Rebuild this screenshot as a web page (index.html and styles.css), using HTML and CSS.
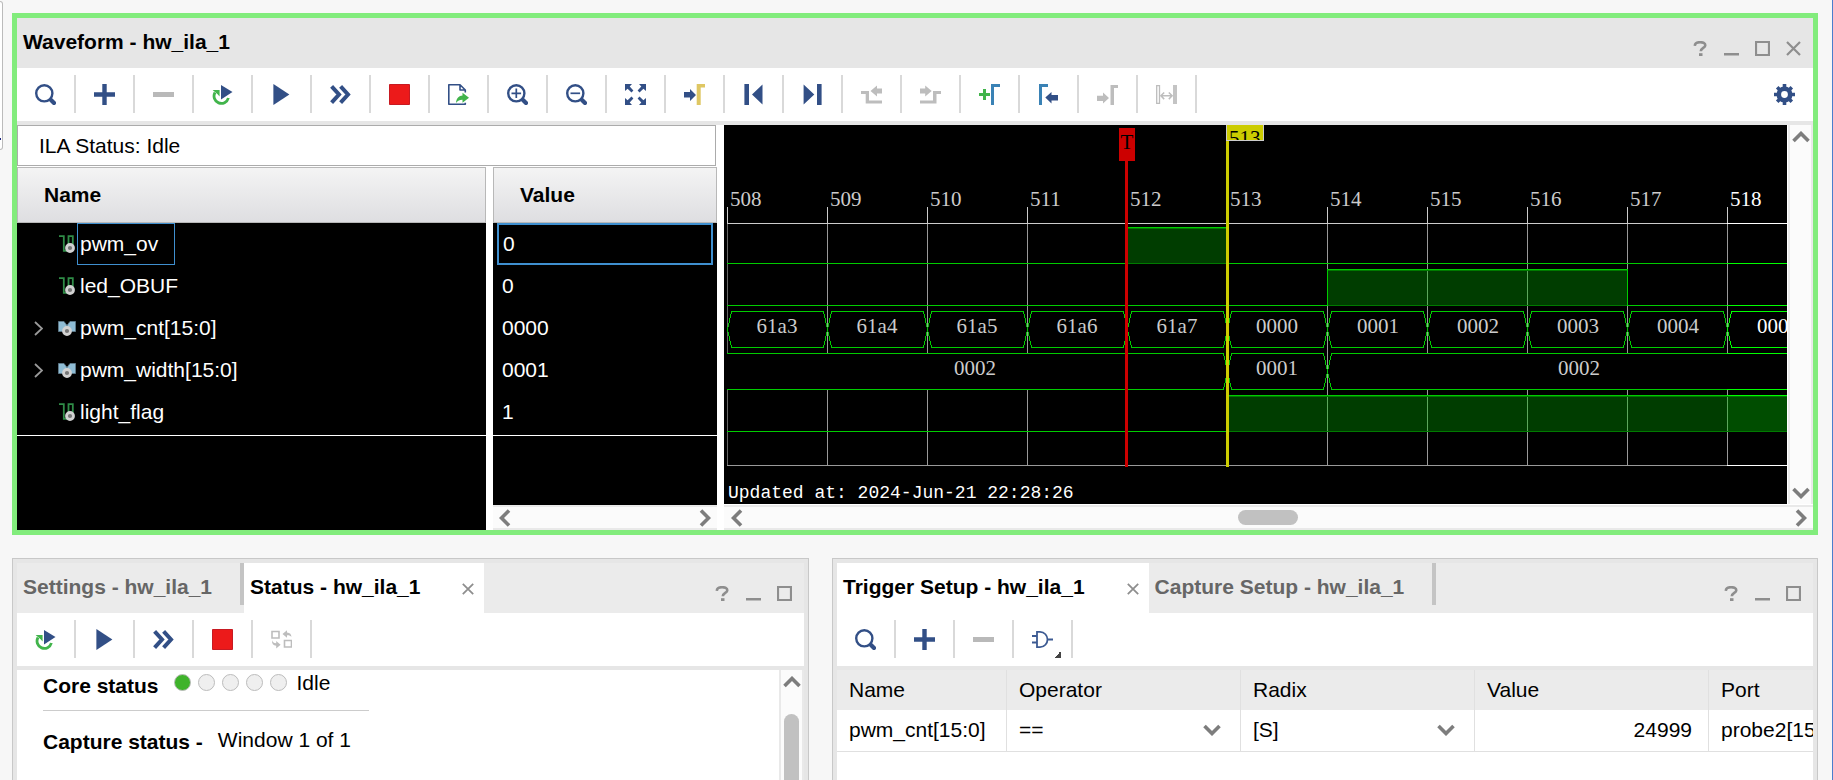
FILE: index.html
```html
<!DOCTYPE html>
<html lang="en">
<head>
<meta charset="utf-8">
<title>Waveform - hw_ila_1</title>
<link rel="stylesheet" href="styles.css">
</head>
<body>
<svg class="sprite" aria-hidden="true">
  <symbol id="search" viewBox="0 0 21 21"><circle cx="9.3" cy="9.3" r="8.1" fill="none" stroke="#324f86" stroke-width="2.4"/><path d="M16 16l3 3" stroke="#324f86" stroke-width="4.2" stroke-linecap="round"/></symbol>
  <symbol id="zoomin" viewBox="0 0 21 21"><use href="#search"/><path d="M4.5 9.3h9.6M9.3 4.5v9.6" stroke="#324f86" stroke-width="1.7"/></symbol>
  <symbol id="zoomout" viewBox="0 0 21 21"><use href="#search"/><path d="M4.5 9.3h9.6" stroke="#324f86" stroke-width="1.7"/></symbol>
  <symbol id="plus" viewBox="0 0 21 21"><path d="M0 10.5h21M10.5 0v21" stroke="#324f86" stroke-width="4.4"/></symbol>
  <symbol id="minus" viewBox="0 0 21 21"><path d="M0 10.5h21" stroke="#b9b9b9" stroke-width="5"/></symbol>
  <symbol id="rerun" viewBox="0 0 21 21"><path d="M3 8.5A7.300 7.300 0 1 0 16.4 14" fill="none" stroke="#41b44b" stroke-width="2.8"/><path d="M.6 6h7v6.6l-2-2.4z" fill="#41b44b"/><path d="M9 1l11.500 7L9 15.400z" fill="#324f86"/></symbol>
  <symbol id="play" viewBox="0 0 21 21"><path d="M2.4 0l16 10.5-16 10.5z" fill="#324f86"/></symbol>
  <symbol id="fast" viewBox="0 0 21 21"><path d="M1.6 2.4l7.4 8.1-7.4 8.1M10.6 2.4l7.4 8.1-7.4 8.1" fill="none" stroke="#324f86" stroke-width="4"/></symbol>
  <symbol id="stop" viewBox="0 0 21 21"><path d="M.5.5h20v20H.5z" fill="#ec1a1a" stroke="#c71a22"/></symbol>
  <symbol id="export" viewBox="0 0 21 21"><path d="M17.3 8.5V6L12 .8H.8v19.4h16.5v-1.5M12 .8V6h5.3" fill="none" stroke="#324f86" stroke-width="1.6" stroke-linejoin="round"/><path d="M8 19c.4-5 3-7.4 6.5-7.6V8.700l6.500 5-6.500 5v-2.900C12 15.700 9.800 16.500 8 19z" fill="#41b44b"/></symbol>
  <symbol id="fit" viewBox="0 0 21 21"><g fill="#324f86"><path id="fa" d="M0 0h7L4.700 2.600l3.700 3.900-1.900 1.900-3.900-3.700L0 7z"/><use href="#fa" transform="matrix(-1 0 0 1 21 0)"/><use href="#fa" transform="matrix(1 0 0 -1 0 21)"/><use href="#fa" transform="rotate(180 10.500 10.500)"/></g></symbol>
  <symbol id="totrig" viewBox="0 0 21 21"><path d="M0 8h6V5l6 6-6 6v-3.500H0z" fill="#324f86"/><path d="M12.700 0H21v3.500h-4.300V21h-4z" fill="#dfc763"/></symbol>
  <symbol id="first" viewBox="0 0 21 21"><path d="M1.400 0H6v21H1.400zM19.500.5v20L9 10.500z" fill="#324f86"/></symbol>
  <symbol id="last" viewBox="0 0 21 21"><path d="M15 0h4.600v21H15zM1.600.5v20L12.300 10.500z" fill="#324f86"/></symbol>
  <symbol id="prevt" viewBox="0 0 21 21"><path d="M0 7h8v9.500h13v3H4.700V10H0zM9.500 7L16 1.500v3h5v5h-5v3z" fill="#bdbdbd"/></symbol>
  <symbol id="nextt" viewBox="0 0 21 21"><path d="M21 7h-8v9.500H0v3h16.500V10H21zM11.700 7L5.200 1.500v3H0v5h5.200v3z" fill="#bdbdbd"/></symbol>
  <symbol id="addm" viewBox="0 0 21 21"><path d="M0 10.500h11M5.500 5v11" stroke="#41b44b" stroke-width="3"/><path d="M12 0h9v3h-6v18h-3z" fill="#3a82b5"/></symbol>
  <symbol id="prevm" viewBox="0 0 21 21"><path d="M1 0h9v3H4v18H1z" fill="#3a82b5"/><path d="M7.300 13.500L13.500 8v3H20v5.500h-6.500v3z" fill="#324f86"/></symbol>
  <symbol id="nextm" viewBox="0 0 21 21"><path d="M0 11.700h6V8.600l6 5.500-6 5.500V17H0zM13.500 1H21v3h-4v17h-3.500z" fill="#bdbdbd"/></symbol>
  <symbol id="measure" viewBox="0 0 21 21"><path d="M.700 1.700h2.800v17.600H.7z" fill="none" stroke="#bdbdbd" stroke-width="1.300"/><path d="M17 1h4v19h-4z" fill="#c4c4c4"/><path d="M5 11.800h11M8.200 8.500L4.900 11.800l3.300 3.300M12.800 8.500l3.300 3.300-3.300 3.300" fill="none" stroke="#bdbdbd" stroke-width="1.500"/></symbol>
  <symbol id="gear" viewBox="0 0 21 21"><g fill="none" stroke="#324f86"><circle cx="10.500" cy="10.500" r="5.700" stroke-width="4.600"/><path d="M10.500 0v4M10.500 17v4M0 10.500h4M17 10.500h4M3.200 3.200l2.700 2.700M15.100 15.100l2.700 2.700M3.200 17.800l2.700-2.700M15.100 5.900l2.700-2.700" stroke-width="3.600"/></g></symbol>
  <symbol id="swap" viewBox="0 0 21 21"><path d="M1 2.500h7V9H1zM13.500 11.500h7V18h-7z" fill="none" stroke="#bdbdbd" stroke-width="1.600"/><path d="M11.500 5L16 1.200v2.200c3 .2 4.400 1.600 4.400 4.600-1-1.500-2.200-1.900-4.400-1.800v2.600zM9.600 15.700L5.200 12v2.200C2.600 14 1.300 13 1 11c-.3 3.700 1.300 5.600 4.200 5.800v2.600z" fill="#bdbdbd"/></symbol>
  <symbol id="gate" viewBox="0 0 21 21"><path d="M5 2.800h3c4.500 0 7.500 4 7.500 7.700S12.500 18.200 8 18.200H5zM0 7h5M0 13.500h5M15.500 10.500H21" fill="none" stroke="#3c5a92" stroke-width="1.800"/></symbol>
  <symbol id="help" viewBox="0 0 15 15"><path d="M1.800 4.800C2 2.300 4.300 1.200 7.100 1.200s5.200 1 5.200 3.100c0 2.700-4.500 2.600-4.500 6" fill="none" stroke="#8e8e8e" stroke-width="2.600"/><path d="M6 12.200h3.500V15H6z" fill="#8e8e8e"/></symbol>
  <symbol id="min" viewBox="0 0 15 15"><path d="M0 12h15v2.500H0z" fill="#8e8e8e"/></symbol>
  <symbol id="max" viewBox="0 0 15 15"><path d="M1 1h13v13H1z" fill="none" stroke="#8e8e8e" stroke-width="2.200"/></symbol>
  <symbol id="close" viewBox="0 0 15 15"><path d="M1 1l13 13M14 1L1 14" stroke="#8e8e8e" stroke-width="2.200"/></symbol>
  <symbol id="chev" viewBox="0 0 18 12"><path d="M1.500 10L9 2.500 16.500 10" fill="none" stroke="#7d7d7d" stroke-width="3.600"/></symbol>
  <symbol id="expand" viewBox="0 0 9 15"><path d="M1 1l7 6.500L1 14" fill="none" stroke="#9a9a9a" stroke-width="1.800"/></symbol>
  <symbol id="scalar" viewBox="0 0 18 18"><path d="M1 1.200h4.800v14.600h4M10.500 15V1.200h4.300V15" fill="none" stroke="#2f8c47" stroke-width="1.800"/><circle cx="12" cy="13" r="3.500" fill="#777" stroke="#d2d2d2" stroke-width="2.800"/></symbol>
  <symbol id="bus" viewBox="0 0 18 18"><path d="M.5 2.500h5.500l3 4 3-4h5.500v10H12L9 10l-3 2.500H.5z" fill="#8fbcd4" stroke="#5c7787"/><circle cx="9" cy="12" r="3.500" fill="#777" stroke="#d2d2d2" stroke-width="2.800"/></symbol>
</svg>

<aside class="edge"><i></i></aside>
<main class="workspace">
  <section class="panel active">
    <header class="titlebar">
      <h1 class="title">Waveform - hw_ila_1</h1>
      <div class="controls">
        <button aria-label="Help"><svg><use href="#help"/></svg></button>
        <button aria-label="Minimize"><svg><use href="#min"/></svg></button>
        <button aria-label="Maximize"><svg><use href="#max"/></svg></button>
        <button aria-label="Close"><svg><use href="#close"/></svg></button>
      </div>
    </header>
    <div class="toolbar">
      <button class="tool" aria-label="Search"><svg><use href="#search"/></svg></button>
      <button class="tool" aria-label="Add"><svg><use href="#plus"/></svg></button>
      <button class="tool" aria-label="Remove"><svg><use href="#minus"/></svg></button>
      <button class="tool" aria-label="Auto re-trigger"><svg><use href="#rerun"/></svg></button>
      <button class="tool" aria-label="Run trigger"><svg><use href="#play"/></svg></button>
      <button class="tool" aria-label="Run immediate"><svg><use href="#fast"/></svg></button>
      <button class="tool" aria-label="Stop trigger"><svg><use href="#stop"/></svg></button>
      <button class="tool" aria-label="Export"><svg><use href="#export"/></svg></button>
      <button class="tool" aria-label="Zoom in"><svg><use href="#zoomin"/></svg></button>
      <button class="tool" aria-label="Zoom out"><svg><use href="#zoomout"/></svg></button>
      <button class="tool" aria-label="Zoom fit"><svg><use href="#fit"/></svg></button>
      <button class="tool" aria-label="Go to trigger"><svg><use href="#totrig"/></svg></button>
      <button class="tool" aria-label="Go to start"><svg><use href="#first"/></svg></button>
      <button class="tool" aria-label="Go to end"><svg><use href="#last"/></svg></button>
      <button class="tool" aria-label="Previous transition"><svg><use href="#prevt"/></svg></button>
      <button class="tool" aria-label="Next transition"><svg><use href="#nextt"/></svg></button>
      <button class="tool" aria-label="Add marker"><svg><use href="#addm"/></svg></button>
      <button class="tool" aria-label="Previous marker"><svg><use href="#prevm"/></svg></button>
      <button class="tool" aria-label="Next marker"><svg><use href="#nextm"/></svg></button>
      <button class="tool" aria-label="Measure"><svg><use href="#measure"/></svg></button>
      <button class="tool settings" aria-label="Settings"><svg><use href="#gear"/></svg></button>
    </div>
    <div class="viewer">
      <div class="signals">
        <p class="status">ILA Status: Idle</p>
        <div class="columns">
          <div class="names">
            <h2 class="colhead">Name</h2>
            <ul class="rows">
              <li><span class="twist"></span><svg class="kind"><use href="#scalar"/></svg><span class="label picked">pwm_ov</span></li>
              <li><span class="twist"></span><svg class="kind"><use href="#scalar"/></svg><span class="label">led_OBUF</span></li>
              <li><button class="twist" aria-label="Expand pwm_cnt"><svg><use href="#expand"/></svg></button><svg class="kind"><use href="#bus"/></svg><span class="label">pwm_cnt[15:0]</span></li>
              <li><button class="twist" aria-label="Expand pwm_width"><svg><use href="#expand"/></svg></button><svg class="kind"><use href="#bus"/></svg><span class="label">pwm_width[15:0]</span></li>
              <li><span class="twist"></span><svg class="kind"><use href="#scalar"/></svg><span class="label">light_flag</span></li>
            </ul>
          </div>
          <div class="values">
            <h2 class="colhead">Value</h2>
            <ul class="rows">
              <li class="picked">0</li><li>0</li><li>0000</li><li>0001</li><li>1</li>
            </ul>
            <div class="hbar">
              <button aria-label="Scroll left"><svg class="left"><use href="#chev"/></svg></button>
              <button aria-label="Scroll right"><svg class="right"><use href="#chev"/></svg></button>
            </div>
          </div>
        </div>
      </div>
      <div class="wave">
        <div class="plotrow">
          <svg class="plot" role="img" aria-label="Signal waveforms, samples 508 to 518">
            <defs>
              <path id="cell" d="M3.500 204.500L7.500 186.500H99.500L103.500 204.500L99.500 222.500H7.500Z"/>
              <clipPath id="flag"><path d="M502 0h38v15h-38z"/></clipPath>
            </defs>
            <path class="grid dim" d="M3.500 98V340"/>
            <path class="grid" d="M103.500 98V340M203.500 98V340M303.500 98V340M603.500 98V340M703.500 98V340M803.500 98V340M903.500 98V340M1003.500 98V340M3 340.500H1003"/>
            <path class="rule" d="M3.500 82v16M103.500 82v16M203.500 82v16M303.500 82v16M603.500 82v16M703.500 82v16M803.500 82v16M903.500 82v16M1003.500 82v16M3 98.500H1003"/>
            <path class="rule bright" d="M1003 98.500H2400M1003 340.500H2400"/>
            <path fill="#000" d="M3 228h500v37H3zM604 228h1800v37H604z"/>

            <path class="fill" d="M404 102h100v37H404zM604 144h300v37H604zM504 270h500v37H504z"/>
            <path class="fill hot" d="M1004 270h1400v37H1004z"/>
            <path class="edge2" d="M404 103.500h100M604 145.500h299M504 271.500h1900M404 138.500h100M604 180.500h299M504 306.500h1900"/>
            <path class="over" d="M703.500 146v34M803.500 146v34M603.500 272v34M703.500 272v34M803.500 272v34M903.500 272v34M1003.500 272v34"/>
            <path class="sig" d="M3 138.500H403M403 102.500H503M503 138.500H1003M3 180.500H603.500V144.500H903.500V180.500H1003M3 306.500H503M503 270.500H1003"/>
            <path class="sig hot" d="M1003 138.500H2400M1003 180.500H2400M1003 270.500H2400M1003 228.500H2400M1003 264.500H2400"/>
            <g class="sig">
              <use href="#cell"/><use href="#cell" x="100"/><use href="#cell" x="200"/><use href="#cell" x="300"/><use href="#cell" x="400"/><use href="#cell" x="500"/><use href="#cell" x="600"/><use href="#cell" x="700"/><use href="#cell" x="800"/><use href="#cell" x="900"/>
              <use href="#cell" x="500" y="42"/>
              <path d="M3 228.500H499.500L503.500 246.500L499.500 264.500H3M1003 228.500H607.500L603.500 246.500L607.500 264.500H1003"/>
            </g>
            <path class="sig hot" d="M2400 186.500H1007.500L1003.500 204.500L1007.500 222.500H2400"/>

            <g class="txt num">
              <text x="6" y="81">508</text><text x="106" y="81">509</text><text x="206" y="81">510</text><text x="306" y="81">511</text><text x="406" y="81">512</text><text x="506" y="81">513</text><text x="606" y="81">514</text><text x="706" y="81">515</text><text x="806" y="81">516</text><text x="906" y="81">517</text><text class="hot" x="1006" y="81">518</text>
            </g>
            <g class="txt num mid">
              <text x="53" y="208">61a3</text><text x="153" y="208">61a4</text><text x="253" y="208">61a5</text><text x="353" y="208">61a6</text><text x="453" y="208">61a7</text><text x="553" y="208">0000</text><text x="654" y="208">0001</text><text x="754" y="208">0002</text><text x="854" y="208">0003</text><text x="954" y="208">0004</text><text class="hot" x="1054" y="208">0005</text>
              <text x="251" y="250">0002</text><text x="553" y="250">0001</text><text x="855" y="250">0002</text>
            </g>
            <text class="txt hot" x="4" y="373">Updated at: 2024-Jun-21 22:28:26</text>

            <path fill="#c00" d="M395 3h16v33h-7v306h-3V36h-6z"/>
            <text class="txt num mid ink" x="403" y="24">T</text>
            <path fill="#cc0" d="M502 0h38v16h-35v326h-3z"/>
            <path fill="none" stroke="#ccc" d="M502.500 0v15.500h37V0"/>
            <g clip-path="url(#flag)"><text class="txt num ink" x="505" y="20">513</text></g>
          </svg>
          <div class="vbar">
            <button aria-label="Scroll up"><svg><use href="#chev"/></svg></button>
            <button aria-label="Scroll down"><svg class="down"><use href="#chev"/></svg></button>
          </div>
        </div>
        <div class="hbar">
          <button aria-label="Scroll left"><svg class="left"><use href="#chev"/></svg></button>
          <span class="track"><span class="thumb"></span></span>
          <button aria-label="Scroll right"><svg class="right"><use href="#chev"/></svg></button>
        </div>
      </div>
    </div>
  </section>

  <div class="dock">
    <section class="panel state">
      <header class="titlebar tabs">
        <button class="tab">Settings - hw_ila_1</button>
        <span class="tabsep"></span>
        <button class="tab current">Status - hw_ila_1<svg><use href="#close"/></svg></button>
        <div class="controls">
          <button aria-label="Help"><svg><use href="#help"/></svg></button>
          <button aria-label="Minimize"><svg><use href="#min"/></svg></button>
          <button aria-label="Maximize"><svg><use href="#max"/></svg></button>
        </div>
      </header>
      <div class="toolbar">
        <button class="tool" aria-label="Auto re-trigger"><svg><use href="#rerun"/></svg></button>
        <button class="tool" aria-label="Run trigger"><svg><use href="#play"/></svg></button>
        <button class="tool" aria-label="Run immediate"><svg><use href="#fast"/></svg></button>
        <button class="tool" aria-label="Stop trigger"><svg><use href="#stop"/></svg></button>
        <button class="tool" aria-label="Swap"><svg><use href="#swap"/></svg></button>
      </div>
      <div class="pane">
        <div class="report">
          <div class="line core"><strong>Core status</strong><span class="dots"><i class="on"></i><i></i><i></i><i></i><i></i></span><span>Idle</span></div>
          <div class="line capture"><strong>Capture status -</strong><span>Window 1 of 1</span></div>
        </div>
        <div class="vbar">
          <button aria-label="Scroll up"><svg><use href="#chev"/></svg></button>
          <span class="thumb"></span>
        </div>
      </div>
    </section>

    <section class="panel setup">
      <header class="titlebar tabs">
        <button class="tab current">Trigger Setup - hw_ila_1<svg><use href="#close"/></svg></button>
        <button class="tab">Capture Setup - hw_ila_1</button>
        <span class="tabsep"></span>
        <div class="controls">
          <button aria-label="Help"><svg><use href="#help"/></svg></button>
          <button aria-label="Minimize"><svg><use href="#min"/></svg></button>
          <button aria-label="Maximize"><svg><use href="#max"/></svg></button>
        </div>
      </header>
      <div class="toolbar">
        <button class="tool" aria-label="Search"><svg><use href="#search"/></svg></button>
        <button class="tool" aria-label="Add probe"><svg><use href="#plus"/></svg></button>
        <button class="tool" aria-label="Remove probe"><svg><use href="#minus"/></svg></button>
        <button class="tool menu" aria-label="Trigger condition"><svg><use href="#gate"/></svg></button>
      </div>
      <div class="pane">
        <table class="probes">
          <colgroup><col class="cname"><col class="cmid"><col class="cmid"><col class="cmid"><col></colgroup>
          <thead><tr><th>Name</th><th>Operator</th><th>Radix</th><th>Value</th><th>Port</th></tr></thead>
          <tbody><tr>
            <td>pwm_cnt[15:0]</td>
            <td><span class="pick"><select aria-label="Operator"><option>==</option></select><svg><use href="#chev"/></svg></span></td>
            <td><span class="pick"><select aria-label="Radix"><option>[S]</option></select><svg><use href="#chev"/></svg></span></td>
            <td class="amount">24999</td>
            <td>probe2[15:0]</td>
          </tr></tbody>
        </table>
      </div>
    </section>
  </div>
</main>
</body>
</html>
```

FILE: styles.css
```css
* { box-sizing: border-box; }
body {
  margin: 0;
  height: 100vh;
  display: flex;
  overflow: hidden;
  background: #f7f7f7;
  border-right: 1px solid #4a7dcc;
  color: #000;
  font: 21px/24px "Liberation Sans", Arial, sans-serif;
}
h1, h2, p, ul { margin: 0; padding: 0; font-size: inherit; list-style: none; }
button, select { margin: 0; padding: 0; border: 0; background: none; font: inherit; color: inherit; }
svg { display: block; flex: none; }
.sprite { position: absolute; width: 0; height: 0; }

.edge {
  flex: none;
  width: 3px;
  height: 149px;
  margin-top: 1px;
  padding-top: 136px;
  background: #fff;
  border: solid #bbb;
  border-width: 1px 1px 1px 0;
  border-radius: 0 4px 4px 0;
}
.edge i { display: block; width: 1px; height: 2px; background: #1a237e; }

.workspace {
  flex: 1;
  min-width: 0;
  display: flex;
  flex-direction: column;
  gap: 23px;
  padding: 13px 14px 0 9px;
}
.panel { display: flex; flex-direction: column; min-width: 0; background: #fff; }
.active { border: 5px solid #82ec7c; }

.titlebar { flex: none; display: flex; height: 50px; background: #e6e6e6; }
.title { padding-left: 6px; line-height: 48px; font-weight: bold; }
.controls { display: flex; align-items: flex-end; gap: 16px; margin-left: auto; padding: 0 12px 12px 0; }
.controls svg { width: 15px; height: 15px; }

.toolbar { flex: none; display: flex; height: 57px; padding: 7px 0 8px; border-bottom: 4px solid #e6e6e6; background: #fff; }
.tool { flex: none; display: flex; align-items: center; width: 59px; padding-left: 18px; border-right: 2px solid #d9d9d9; }
.tool svg { width: 21px; height: 21px; }
.settings { width: 39px; padding: 0; margin-left: auto; border: 0; }
.menu { position: relative; }
.menu::after { content: ""; position: absolute; right: 10px; bottom: 0; width: 7px; height: 7px; background: linear-gradient(135deg, transparent 50%, #444 50%); }

.viewer { display: flex; gap: 7px; height: 405px; }
.signals { flex: none; width: 700px; display: flex; flex-direction: column; gap: 1px; }
.status { height: 41px; margin-right: 1px; padding-left: 21px; line-height: 39px; border: 1px solid #ababab; }
.columns { flex: 1; display: flex; gap: 7px; }
.names { flex: 1; background: #000; }
.values { flex: none; width: 224px; display: flex; flex-direction: column; background: #000; }
.colhead { height: 56px; padding-left: 26px; line-height: 54px; border: 1px solid #b8b8b8; background: linear-gradient(#f4f4f4, #dedee1); }
.rows { padding-bottom: 2px; border-bottom: 1px solid #fff; color: #fff; line-height: 42px; }
.rows li { height: 42px; }
.names li { display: flex; align-items: center; padding-left: 17px; }
.twist { width: 9px; margin-right: 15px; }
.twist svg { width: 9px; height: 15px; }
.kind { width: 18px; height: 18px; margin-right: 1px; }
.label { height: 42px; padding: 0 16px 0 2px; border: 1px solid transparent; line-height: 40px; }
.label.picked { border-color: #3f8fcf; }
.values li { margin: 0 4px; padding-left: 5px; }
.values li.picked { padding-left: 4px; border: 2px solid #3f8fcf; line-height: 38px; }
.values .hbar { margin-top: auto; }

.hbar { flex: none; display: flex; align-items: center; justify-content: space-between; height: 25px; padding: 0 6px; border: solid #e9e9e9; border-width: 2px 0; background: #fbfbfb; }
.hbar button { display: flex; align-items: center; justify-content: center; width: 12px; height: 18px; }
.hbar svg { width: 18px; height: 12px; }
.left { transform: rotate(-90deg); }
.right { transform: rotate(90deg); }
.down { transform: rotate(180deg); }
.track { flex: 1; padding-left: 46%; }
.hbar .thumb { display: block; width: 60px; height: 15px; border-radius: 8px; background: #c1c1c1; }

.wave { flex: 1; min-width: 0; display: flex; flex-direction: column; }
.plotrow { flex: 1; display: flex; min-height: 0; padding-bottom: 1px; }
.plot { flex: 1; min-width: 0; height: 379px; margin-right: 1px; overflow: hidden; background: #000; }
.vbar { flex: none; display: flex; flex-direction: column; justify-content: space-between; width: 25px; padding: 6px 2px 5px; border: solid #e9e9e9; border-width: 0 2px; background: #fbfbfb; }
.vbar svg { width: 18px; height: 12px; }
.wave .hbar { padding: 0 6px 0 7px; }

.plot path { shape-rendering: crispEdges; }
.grid, .rule, .over, .edge2 { fill: none; stroke: #999; }
.grid.dim { stroke: #666; }
.rule { stroke: #ccc; }
.rule.bright { stroke: #fff; }
.fill { fill: #003d00; }
.edge2 { stroke: #007a00; }
.over { stroke: #5ca65c; }
.sig { fill: none; stroke: #0c0; }
.txt { font: 18px "Liberation Mono", "Courier New", monospace; fill: #ccc; }
.num { font: 21px "Liberation Serif", "Times New Roman", serif; }
.hot { fill: #fff; }
.sig.hot { fill: none; stroke: #0f0; }
.fill.hot { fill: #004d00; }
.mid { text-anchor: middle; }
.ink { fill: #000; }

.dock { flex: 1; min-height: 0; display: flex; gap: 23px; }
.dock .panel { border: 1px solid #c8c8c8; border-bottom: 0; padding: 4px 4px 0; background: #e6e6e6; }
.state { flex: 787 1 0; }
.setup { flex: 976 1 0; }
.tabs { background: #ebebeb; }
.tab { display: flex; align-items: center; height: 50px; padding: 0 28px 2px 6px; color: #666; font-weight: bold; white-space: nowrap; }
.tab svg { width: 12px; height: 12px; margin: 3px 0 0 42px; }
.tab.current { padding-right: 10px; background: #fff; color: #000; }
.tabsep { width: 4px; height: 42px; background: #c4c4c4; }
.pane { flex: 1; min-height: 0; display: flex; overflow: hidden; background: #fff; }
.report { flex: 1; padding-left: 26px; }
.state .vbar { justify-content: flex-start; gap: 26px; }
.state .vbar .thumb { flex: none; width: 15px; height: 200px; margin-left: 1px; border-radius: 8px; background: #c1c1c1; }
.line { display: flex; align-items: flex-start; }
.line strong { padding-top: 4px; }
.core { width: 326px; height: 41px; border-bottom: 1px solid #ccc; }
.core > span { padding-top: 1px; }
.core .dots { display: flex; gap: 7px; margin: 3px 10px 0 15px; }
.dots i { width: 17px; height: 17px; border: 1px solid #bcbcbc; border-radius: 50%; background: #efefef; }
.dots .on { background: #3fb32b; }
.capture { gap: 15px; padding-top: 15px; }
.capture span { padding-top: 2px; }

.probes { align-self: flex-start; width: 100%; table-layout: fixed; border-collapse: separate; border-spacing: 0; border-bottom: 1px solid #e0e0e0; }
.cname { width: 170px; }
.cmid { width: 234px; }
.probes th, .probes td { height: 40px; padding: 0 15px 0 12px; overflow: hidden; border-right: 1px solid #e0e0e0; text-align: left; font-weight: normal; white-space: nowrap; }
.probes th { background: #ebebeb; }
.probes td { height: 41px; padding-bottom: 2px; }
.probes td:first-child { padding-right: 0; }
.probes th:last-child, .probes td:last-child { border-right: 0; padding-right: 0; text-overflow: clip; }
.probes td.amount { padding-right: 16px; text-align: right; }
.pick { display: flex; align-items: center; }
.pick select { flex: 1; height: 24px; appearance: none; }
.pick svg { width: 18px; height: 12px; margin-right: 4px; transform: rotate(180deg); pointer-events: none; }
```
